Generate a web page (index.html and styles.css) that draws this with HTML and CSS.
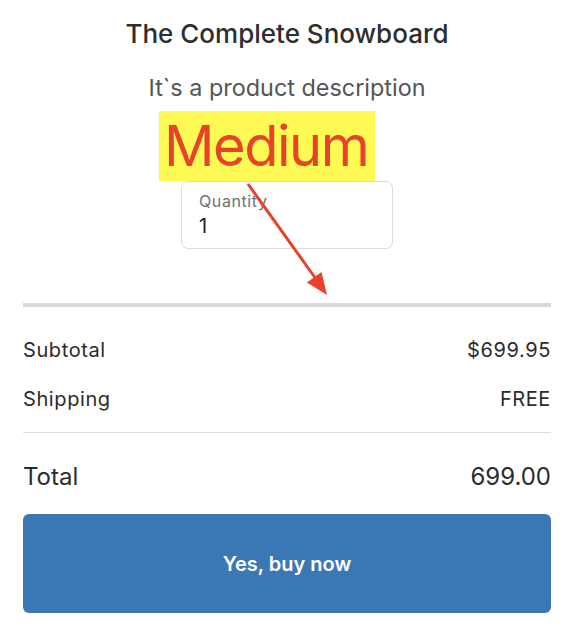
FILE: index.html
```html
<!DOCTYPE html>
<html>
<head>
<meta charset="utf-8">
<link rel="stylesheet" href="styles.css">
</head>
<body>
<main class="page">
  <h1 class="title">The Complete Snowboard</h1>
  <p class="desc">It`s a product description</p>
  <div class="variant-row">
    <span class="variant">Medium</span>
  </div>
  <div class="qty-row">
    <div class="qty">
      <span class="qty-label">Quantity</span>
      <span class="qty-value">1</span>
    </div>
  </div>
  <hr class="rule-thick">
  <div class="line"><span>Subtotal</span><span>$699.95</span></div>
  <div class="line"><span>Shipping</span><span>FREE</span></div>
  <hr class="rule-thin">
  <div class="line total"><span>Total</span><span>699.00</span></div>
  <button class="buy">Yes, buy now</button>
</main>
<svg class="annot" width="574" height="628" viewBox="0 0 574 628">
  <line x1="248" y1="184" x2="316" y2="279" stroke="#e8432a" stroke-width="3"/>
  <polygon points="327,295 306.9,282.5 321.5,271.9" fill="#e8432a"/>
</svg>
</body>
</html>
```
FILE: styles.css
```css
html, body {
  margin: 0;
  padding: 0;
  background: #fff;
}
body {
  position: relative;
  font-family: Inter, "Noto Sans", sans-serif;
  color: #2b2b2b;
}
.page {
  padding: 18px 23px 0;
  display: flex;
  flex-direction: column;
}
.title {
  margin: 0;
  font-size: 26px;
  line-height: 32px;
  font-weight: 500;
  text-align: center;
  color: #2e2e2e;
}
.desc {
  margin: 23px 0 0;
  font-size: 23.4px;
  line-height: 30px;
  text-align: center;
  color: #555;
}
.variant-row {
  margin-top: 8px;
  display: flex;
  justify-content: center;
}
.variant {
  box-sizing: border-box;
  width: 216px;
  margin-right: 40px;
  background: #fffb54;
  color: #e8432a;
  font-size: 56px;
  letter-spacing: -1.5px;
  line-height: 70px;
  height: 70px;
  padding-left: 5px;
}
.qty-row {
  display: flex;
  justify-content: center;
}
.qty {
  width: 193px;
  border: 1px solid #dadada;
  border-radius: 7px;
  padding: 9px 0 10px 17px;
  display: flex;
  flex-direction: column;
  gap: 3px;
}
.qty-label {
  font-size: 16px;
  line-height: 20px;
  letter-spacing: 0.6px;
  color: #6d7175;
}
.qty-value {
  font-size: 20px;
  line-height: 24px;
  color: #202223;
}
.rule-thick {
  margin: 54px 0 0;
  border: 0;
  height: 4px;
  background: #d9d9d9;
}
.line {
  display: flex;
  justify-content: space-between;
  font-size: 20px;
  line-height: 24px;
  letter-spacing: 0.6px;
  color: #2b2b2b;
  margin-top: 25px;
}
.rule-thick + .line {
  margin-top: 31px;
}
.rule-thin {
  margin: 21px 0 0;
  border: 0;
  height: 1px;
  background: #dedede;
}
.line.total {
  margin-top: 29px;
  font-size: 24px;
  line-height: 30px;
  letter-spacing: 0;
}
.buy {
  margin-top: 22px;
  height: 99px;
  border: 0;
  border-radius: 6px;
  background: #3b77b4;
  color: #fff;
  font-family: Inter, "Noto Sans", sans-serif;
  font-size: 20px;
  font-weight: 600;
}
.annot {
  position: absolute;
  left: 0;
  top: 0;
  pointer-events: none;
}
```
